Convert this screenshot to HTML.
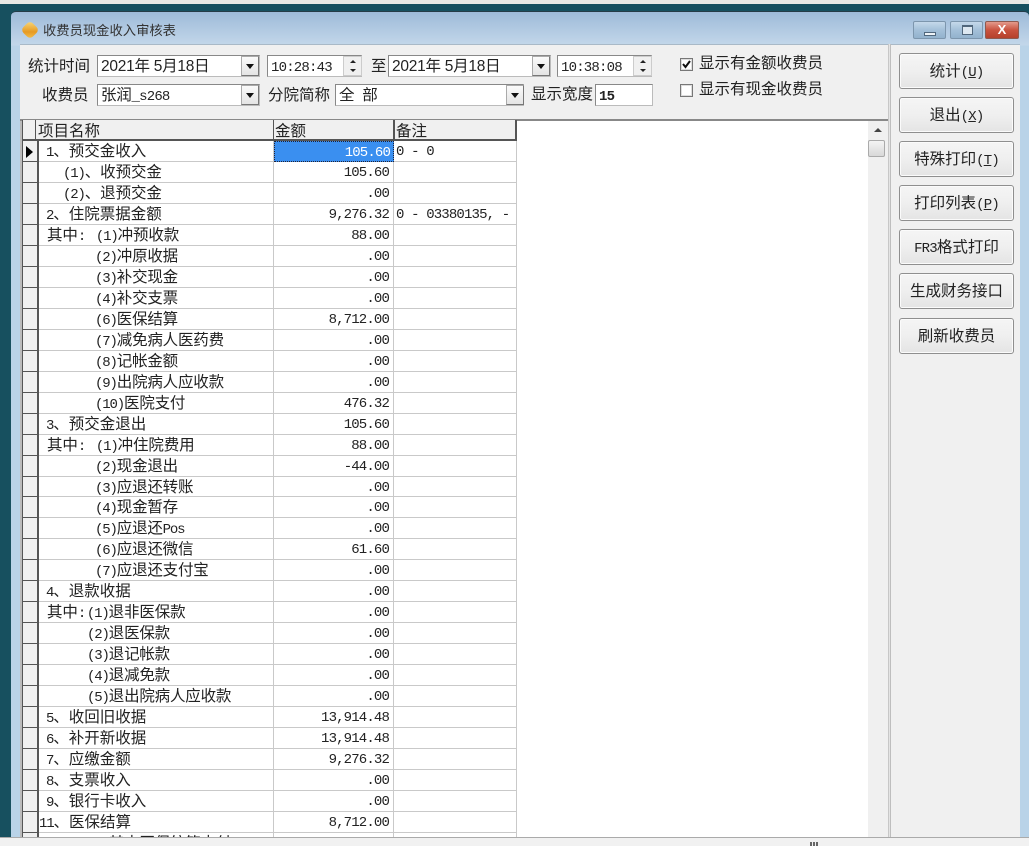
<!DOCTYPE html>
<html><head><meta charset="utf-8">
<style>
*{box-sizing:border-box;margin:0;padding:0}
html,body{width:1029px;height:846px;overflow:hidden;background:#17505f}
body{position:relative;font-family:"Liberation Sans","Noto Sans CJK SC",sans-serif;font-size:15.5px;color:#222;filter:blur(.35px)}
.x{position:absolute}
i{font-family:"Liberation Mono","Noto Sans CJK SC",monospace;font-style:normal;font-size:14px;letter-spacing:-.8px}
.t{position:absolute;white-space:nowrap;line-height:24px;height:24px}
.f{position:absolute;background:#fff;border:1px solid #bbb;border-top-color:#888;border-left-color:#888;height:22px;line-height:22px;white-space:nowrap;padding-left:3px;letter-spacing:-.25px}
.d{position:absolute;width:18px;height:20px;background:linear-gradient(#fafafa,#e4e4e4);border:1px solid #aaa;border-right-color:#777;border-bottom-color:#777}
.d:after{content:"";position:absolute;left:4px;top:7px;border:4px solid transparent;border-top:5px solid #111;border-bottom:0}
.s{position:absolute;width:19px;height:20px;background:#f0f0f0;border:1px solid #ccc}
.s:before{content:"";position:absolute;left:6px;top:3px;border:3px solid transparent;border-bottom:3px solid #222;border-top:0}
.s:after{content:"";position:absolute;left:6px;top:12px;border:3px solid transparent;border-top:3px solid #222;border-bottom:0}
.btn{position:absolute;left:899px;width:115px;height:36px;border:1px solid #8f8f8f;border-radius:3px;background:linear-gradient(#f5f5f5,#efefef 50%,#e4e4e4);text-align:center;line-height:36px;box-shadow:inset 0 0 0 1px #fbfbfb;white-space:nowrap}
.wb{position:absolute;top:21px;height:18px;border:1px solid #7d96ad;border-radius:2px;background:linear-gradient(#c5d9ea,#a4c0d9 50%,#93b2cd)}
.cb{position:absolute;left:680px;width:13px;height:13px;background:#fff;border:1px solid #777;box-shadow:inset 0 0 0 1px #ddd}
#g{position:absolute;left:22px;top:141px;width:494px;background:#fff}
.r{position:relative;height:20.97px;border-bottom:1px solid #c9c9c9;margin-left:14px}
.r:before{content:"";position:absolute;left:-14px;top:0;bottom:-1px;width:14px;background:#f0f0f0;border:1px solid #555;border-top:0;border-right-width:2px}
.r span{position:absolute;top:0;line-height:22px;white-space:nowrap}
.r span i{letter-spacing:-1.15px}
.r b{position:absolute;right:127px;top:0;line-height:22px;font-weight:400;font-family:"Liberation Mono",monospace;font-size:14px;letter-spacing:-.85px}
.r u{position:absolute;left:360px;top:0;line-height:22px;text-decoration:none;font-family:"Liberation Mono",monospace;font-size:14px;letter-spacing:-.85px;white-space:nowrap}
.a{left:10px}.c{left:27px;letter-spacing:-.1px}.e{left:59px;letter-spacing:-.2px}.h{left:51px;letter-spacing:-.2px}.z{left:3px}.q{left:11px;letter-spacing:-.1px}
.k{display:inline-block;width:17px}.m{display:inline-block;width:9px}
.btn u{text-decoration:underline}
</style></head><body>
<div class="x" style="left:0;top:0;width:1029px;height:4px;background:#e9e9e5"></div>
<div class="x" style="left:11px;top:11px;width:1018px;height:835px;border-radius:5px 5px 0 0;background:linear-gradient(#9ebbd9,#c3d7ea 33px,#b9d3e8 34px);border-top:1px solid #263c48"></div>
<div class="x" style="left:22px;top:22px;width:16px;height:16px;background:linear-gradient(135deg,#f9dc80,#e69a22 60%,#f7c44f);transform:rotate(45deg) scale(.84);border-radius:5px"></div>
<div class="t" style="left:43px;top:19px;font-size:13.3px;color:#333">收费员现金收入审核表</div>
<div class="wb" style="left:913px;width:33px"><div class="x" style="left:10px;top:10px;width:12px;height:4px;background:#eef3f7;border:1px solid #51677c"></div></div>
<div class="wb" style="left:950px;width:33px"><div class="x" style="left:11px;top:3px;width:11px;height:10px;background:#dde8f1;border:1px solid #51677c;border-top-width:2px"></div></div>
<div class="wb" style="left:985px;width:34px;background:linear-gradient(#e39a8c,#c9533f 50%,#b5412c);border-color:#8e5a50;color:#fff;text-align:center;font-weight:700;font-size:13px;line-height:15px">X</div>

<div class="x" style="left:20px;top:44px;width:1000px;height:802px;background:#f0f0f0;border-top:1px solid #a9b9c7"></div>
<div class="x" style="left:888px;top:44px;width:3px;height:802px;background:linear-gradient(90deg,#aaa,#f0f0f0 40%,#aaa)"></div>

<div class="t" style="left:28px;top:55px">统计时间</div>
<div class="f" style="left:97px;top:55px;width:163px">2021年 5月18日</div><div class="d" style="left:241px;top:56px"></div>
<div class="f" style="left:267px;top:55px;width:95px;padding-left:3px"><i>10:28:43</i></div><div class="s" style="left:343px;top:56px"></div>
<div class="t" style="left:371px;top:55px">至</div>
<div class="f" style="left:388px;top:55px;width:163px">2021年 5月18日</div><div class="d" style="left:532px;top:56px"></div>
<div class="f" style="left:557px;top:55px;width:95px"><i>10:38:08</i></div><div class="s" style="left:633px;top:56px"></div>
<div class="t" style="left:42px;top:84px">收费员</div>
<div class="f" style="left:97px;top:84px;width:163px">张润<i>_s268</i></div><div class="d" style="left:241px;top:85px"></div>
<div class="t" style="left:268px;top:84px">分院简称</div>
<div class="f" style="left:335px;top:84px;width:189px;word-spacing:4px">全 部</div><div class="d" style="left:506px;top:85px"></div>
<div class="t" style="left:531px;top:83px">显示宽度</div>
<div class="f" style="left:595px;top:84px;width:58px"><i style="font-weight:700">15</i></div>
<div class="cb" style="top:58px"><svg width="11" height="11" style="position:absolute;left:0;top:0"><path d="M2 5l2.5 3L9 2" fill="none" stroke="#111" stroke-width="2"/></svg></div>
<div class="t" style="left:699px;top:52px">显示有金额收费员</div>
<div class="cb" style="top:84px"></div>
<div class="t" style="left:699px;top:78px">显示有现金收费员</div>

<div class="x" style="left:20px;top:119px;width:868px;height:718px;background:#fff;border-top:2px solid #888"></div>
<div class="x" style="left:868px;top:121px;width:20px;height:716px;background:#f0f0f0"></div>
<div class="x" style="left:874px;top:128px;border:4px solid transparent;border-bottom:4px solid #444;border-top:0"></div>
<div class="x" style="left:868px;top:140px;width:17px;height:17px;background:linear-gradient(#f4f4f4,#d8d8d8);border:1px solid #aaa;border-radius:2px"></div>
<div class="x" style="left:20px;top:121px;width:3px;height:716px;background:#bbb"></div>

<div class="x" style="left:22px;top:120px;width:495px;height:21px;background:#f0f0f0;border:1px solid #555;border-bottom-width:2px;border-top:0;border-right-width:2px"></div>
<div class="x" style="left:35px;top:120px;width:1px;height:21px;background:#555"></div>
<div class="x" style="left:273px;top:120px;width:1px;height:21px;background:#555"></div>
<div class="x" style="left:393px;top:120px;width:2px;height:21px;background:#555"></div>
<div class="t" style="left:38px;top:121px;line-height:22px">项目名称</div>
<div class="t" style="left:275px;top:121px;line-height:22px">金额</div>
<div class="t" style="left:396px;top:121px;line-height:22px">备注</div>

<div id="g">
<div class="r"><span class="a"><i>1</i>、预交金收入</span><b>105.60</b><u>0 - 0</u></div>
<div class="r"><span class="c"><i>(1)</i>、收预交金</span><b>105.60</b></div>
<div class="r"><span class="c"><i>(2)</i>、退预交金</span><b>.00</b></div>
<div class="r"><span class="a"><i>2</i>、住院票据金额</span><b>9,276.32</b><u>0 - 03380135, -</u></div>
<div class="r"><span class="q">其中<i class="k">:</i><i style="margin-left:1px">(1)</i>冲预收款</span><b>88.00</b></div>
<div class="r"><span class="e"><i>(2)</i>冲原收据</span><b>.00</b></div>
<div class="r"><span class="e"><i>(3)</i>补交现金</span><b>.00</b></div>
<div class="r"><span class="e"><i>(4)</i>补交支票</span><b>.00</b></div>
<div class="r"><span class="e"><i>(6)</i>医保结算</span><b>8,712.00</b></div>
<div class="r"><span class="e"><i>(7)</i>减免病人医药费</span><b>.00</b></div>
<div class="r"><span class="e"><i>(8)</i>记帐金额</span><b>.00</b></div>
<div class="r"><span class="e"><i>(9)</i>出院病人应收款</span><b>.00</b></div>
<div class="r"><span class="e"><i>(10)</i>医院支付</span><b>476.32</b></div>
<div class="r"><span class="a"><i>3</i>、预交金退出</span><b>105.60</b></div>
<div class="r"><span class="q">其中<i class="k">:</i><i style="margin-left:1px">(1)</i>冲住院费用</span><b>88.00</b></div>
<div class="r"><span class="e"><i>(2)</i>现金退出</span><b>-44.00</b></div>
<div class="r"><span class="e"><i>(3)</i>应退还转账</span><b>.00</b></div>
<div class="r"><span class="e"><i>(4)</i>现金暂存</span><b>.00</b></div>
<div class="r"><span class="e"><i>(5)</i>应退还<i>Pos</i></span><b>.00</b></div>
<div class="r"><span class="e"><i>(6)</i>应退还微信</span><b>61.60</b></div>
<div class="r"><span class="e"><i>(7)</i>应退还支付宝</span><b>.00</b></div>
<div class="r"><span class="a"><i>4</i>、退款收据</span><b>.00</b></div>
<div class="r"><span class="q">其中<i class="m">:</i><i>(1)</i>退非医保款</span><b>.00</b></div>
<div class="r"><span class="h"><i>(2)</i>退医保款</span><b>.00</b></div>
<div class="r"><span class="h"><i>(3)</i>退记帐款</span><b>.00</b></div>
<div class="r"><span class="h"><i>(4)</i>退减免款</span><b>.00</b></div>
<div class="r"><span class="h"><i>(5)</i>退出院病人应收款</span><b>.00</b></div>
<div class="r"><span class="a"><i>5</i>、收回旧收据</span><b>13,914.48</b></div>
<div class="r"><span class="a"><i>6</i>、补开新收据</span><b>13,914.48</b></div>
<div class="r"><span class="a"><i>7</i>、应缴金额</span><b>9,276.32</b></div>
<div class="r"><span class="a"><i>8</i>、支票收入</span><b>.00</b></div>
<div class="r"><span class="a"><i>9</i>、银行卡收入</span><b>.00</b></div>
<div class="r"><span class="z"><i>11</i>、医保结算</span><b>8,712.00</b></div>
<div class="r"><span class="h"><i>(1)</i>其中医保统筹支付</span><b></b></div>
</div>
<div class="x" style="left:273px;top:141px;width:1px;height:696px;background:#c9c9c9"></div>
<div class="x" style="left:393px;top:141px;width:1px;height:696px;background:#c9c9c9"></div>
<div class="x" style="left:516px;top:141px;width:1px;height:696px;background:#c9c9c9"></div>
<div class="x" style="left:274px;top:141px;width:120px;height:21px;background:#3a8ff0;border:1px dotted #223;color:#fff;text-align:right;padding-right:3px;line-height:20px"><i style="letter-spacing:-.85px">105.60</i></div>
<div class="x" style="left:26px;top:146px;border:5px solid transparent;border-left:7px solid #000;border-right:0;border-top-width:6px;border-bottom-width:6px"></div>

<div class="btn" style="top:53px">统计<i>(<u>U</u>)</i></div>
<div class="btn" style="top:97px">退出<i>(<u>X</u>)</i></div>
<div class="btn" style="top:141px">特殊打印<i>(<u>T</u>)</i></div>
<div class="btn" style="top:185px">打印列表<i>(<u>P</u>)</i></div>
<div class="btn" style="top:229px"><i>FR3</i>格式打印</div>
<div class="btn" style="top:273px">生成财务接口</div>
<div class="btn" style="top:318px">刷新收费员</div>

<div class="x" style="left:0;top:837px;width:1029px;height:9px;background:#f1f1f1;border-top:1px solid #aaa"></div>
<div class="x" style="left:810px;top:842px;width:2px;height:4px;background:#666"></div>
<div class="x" style="left:813px;top:842px;width:2px;height:4px;background:#666"></div>
<div class="x" style="left:816px;top:842px;width:2px;height:4px;background:#666"></div>
</body></html>
